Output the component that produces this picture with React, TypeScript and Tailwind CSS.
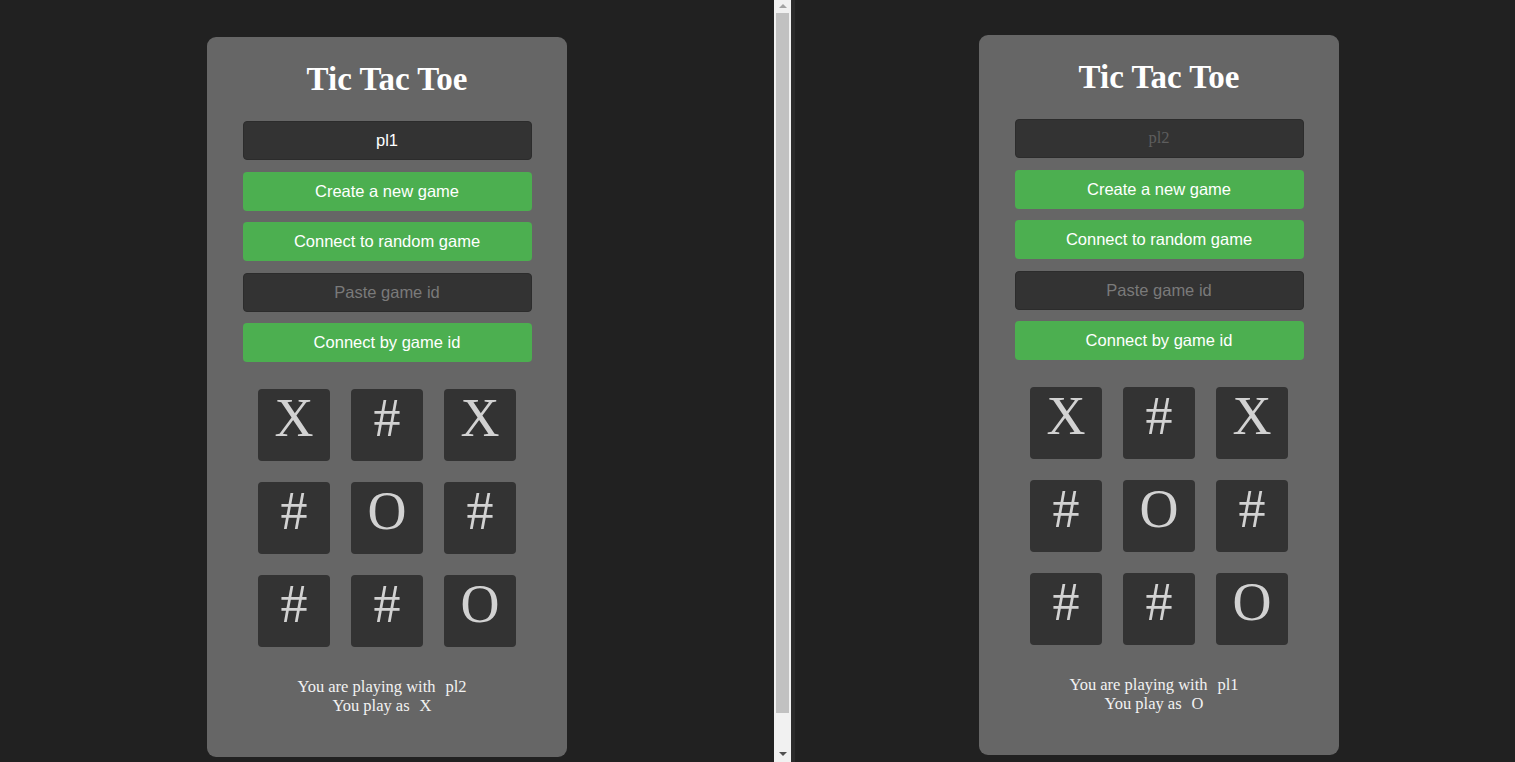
import { ReactNode } from "react";

interface BoardProps {
  cells: string[];
  opponent: string;
  mark: string;
  nameInput: ReactNode;
}

const serif = "font-['Liberation_Serif','Times_New_Roman',serif]";
const sans = "font-['Liberation_Sans',Arial,sans-serif]";

function GreenButton({ children }: { children: ReactNode }) {
  return (
    <button
      className={`w-[289px] h-[39px] rounded-[4px] bg-[#4caf50] text-white text-[16.5px] ${sans}`}
    >
      {children}
    </button>
  );
}

function GameCard({ cells, opponent, mark, nameInput }: BoardProps) {
  return (
    <div className="w-[360px] h-[720px] rounded-[9px] bg-[#666666] flex flex-col items-center pt-[24px]">
      <h1
        className={`text-[33px] leading-[36px] font-bold text-white ${serif}`}
      >
        Tic Tac Toe
      </h1>

      <div className="mt-[24px] flex flex-col gap-[11.5px]">
        {nameInput}
        <GreenButton>Create a new game</GreenButton>
        <GreenButton>Connect to random game</GreenButton>
        <div
          className={`w-[289px] h-[39px] rounded-[4px] bg-[#333333] border border-[#2c2c2c] flex items-center justify-center text-[16.5px] text-[#7a7a7a] ${sans}`}
        >
          Paste game id
        </div>
        <GreenButton>Connect by game id</GreenButton>
      </div>

      <div className="mt-[27px] grid grid-cols-[72px_72px_72px] gap-x-[21px] gap-y-[21px]">
        {cells.map((c, i) => (
          <div
            key={i}
            className={`w-[72px] h-[72px] rounded-[4px] bg-[#333333] flex items-center justify-center text-[54px] leading-none text-[#d2d2d2] pb-[14px] ${serif}`}
          >
            {c}
          </div>
        ))}
      </div>

      <div
        className={`mt-[30px] pr-[10px] text-[16.5px] leading-[19px] text-[#f2f2f2] text-center ${serif}`}
      >
        <p>
          You are playing with<span className="ml-[10px]">{opponent}</span>
        </p>
        <p>
          You play as<span className="ml-[10px]">{mark}</span>
        </p>
      </div>
    </div>
  );
}

export default function App() {
  const board = ["X", "#", "X", "#", "O", "#", "#", "#", "O"];

  return (
    <div className="w-[1515px] h-[762px] bg-[#212121] flex overflow-hidden">
      <div className="w-[774px] h-full flex justify-center pt-[37px]">
        <GameCard
          cells={board}
          opponent="pl2"
          mark="X"
          nameInput={
            <div
              className={`w-[289px] h-[39px] rounded-[4px] bg-[#333333] border border-[#2c2c2c] flex items-center justify-center text-[16.5px] text-white ${sans}`}
            >
              pl1
            </div>
          }
        />
      </div>

      <div className="w-[17px] h-full bg-[#f1f1f1] flex flex-col items-center">
        <div className="h-[12px] flex items-center justify-center">
          <div className="w-0 h-0 border-l-[4px] border-r-[4px] border-b-[4px] border-l-transparent border-r-transparent border-b-[#a3a3a3]" />
        </div>
        <div className="w-[13px] h-[700px] bg-[#c1c1c1] mt-[1px]" />
        <div className="flex-1" />
        <div className="h-[16px] flex items-center justify-center">
          <div className="w-0 h-0 border-l-[4px] border-r-[4px] border-t-[4px] border-l-transparent border-r-transparent border-t-[#505050]" />
        </div>
      </div>

      <div className="w-[4px] h-full bg-[#2b2b2b]" />

      <div className="flex-1 h-full pt-[35px] pl-[184px]">
        <GameCard
          cells={board}
          opponent="pl1"
          mark="O"
          nameInput={
            <div
              className={`w-[289px] h-[39px] rounded-[4px] bg-[#333333] border border-[#2c2c2c] flex items-center justify-center text-[16.5px] text-[#5e5e5e] ${serif}`}
            >
              pl2
            </div>
          }
        />
      </div>
    </div>
  );
}
